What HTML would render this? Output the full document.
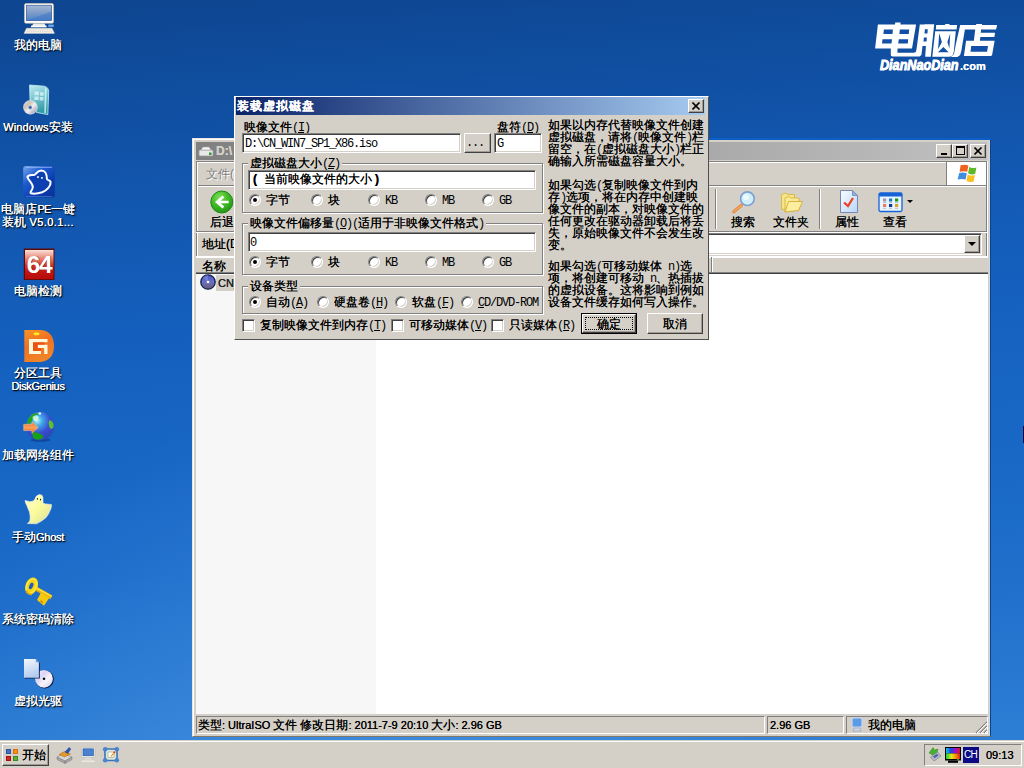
<!DOCTYPE html>
<html><head><meta charset="utf-8">
<style>
html,body{margin:0;padding:0}
body{width:1024px;height:768px;overflow:hidden;position:relative;font-family:"Liberation Sans",sans-serif;font-size:12px;line-height:14px;color:#000;
background:radial-gradient(circle 520px at 400px 900px,rgba(90,165,240,.45) 0%,rgba(90,165,240,.3) 50%,rgba(90,165,240,0) 100%),linear-gradient(176deg,#0e4590 0%,#0f4c9c 10%,#1256ae 24%,#1562c1 46%,#1b6bc8 70%,#2f80d6 100%);}
.a{position:absolute}
.t{position:absolute;white-space:nowrap;text-shadow:0 0 0}
/* desktop icons */
.dl{position:absolute;margin-top:1px;left:-12px;width:100px;text-align:center;color:#fff;font-size:12px;line-height:13px;text-shadow:0 0 0 #fff,1px 1px 1px #000,1px 1px 2px rgba(0,0,0,.8);white-space:nowrap}
.l{font-size:11px;letter-spacing:-.3px}
.l2{font-size:11px}
.di{position:absolute;left:22px;width:32px;height:32px}
/* 3d */
.win{position:absolute;background:#d4d0c8;border:1px solid;border-color:#d4d0c8 #404040 #404040 #d4d0c8;box-shadow:inset 1px 1px 0 #fff,inset -1px -1px 0 #808080;box-sizing:border-box}
.btn{position:absolute;background:#d4d0c8;border:1px solid;border-color:#fff #404040 #404040 #fff;box-shadow:inset -1px -1px 0 #a09c94;box-sizing:border-box}
.sunk{position:absolute;background:#fff;border:1px solid;border-color:#808080 #fff #fff #808080;box-shadow:inset 1px 1px 0 #404040,inset -1px -1px 0 #d4d0c8;box-sizing:border-box}
.grp{position:absolute;border:1px solid #808080;box-shadow:1px 1px 0 #fff,inset 1px 1px 0 #fff;box-sizing:border-box}
.gl{position:absolute;background:#d4d0c8;white-space:nowrap;padding:0 2px;line-height:12px;text-shadow:0 0 0 #000}
.rd{position:absolute;width:12px;height:12px;border-radius:50%;background:#fff;box-sizing:border-box;border:1px solid;border-color:#808080 #fff #fff #808080;box-shadow:inset 1px 1px 0 #404040,inset -1px -1px 0 #d4d0c8}
.rd.on:after{content:"";position:absolute;left:3px;top:3px;width:4px;height:4px;border-radius:50%;background:#000}
.cb{position:absolute;width:13px;height:13px;background:#fff;box-sizing:border-box;border:1px solid;border-color:#808080 #fff #fff #808080;box-shadow:inset 1px 1px 0 #404040,inset -1px -1px 0 #d4d0c8}
.mono{font-family:"Liberation Mono",monospace;display:inline-block;transform:scaleX(.833);transform-origin:0 50%}
.m{font-family:"Liberation Mono",monospace;letter-spacing:-1.2px;line-height:0;text-shadow:none}
.dt{position:absolute;white-space:nowrap;line-height:12px;font-size:12px;text-shadow:0 0 0 #000}
</style></head><body>

<!-- DESKTOP ICONS -->
<div id="desk">
<!--ICONS--><svg class="a" style="left:14px;top:0px" width="48" height="36" viewBox="14 0 48 36"><defs><linearGradient id="scr" x1="0" y1="0" x2="0" y2="1"><stop offset="0" stop-color="#a4b8d6"/><stop offset=".5" stop-color="#7d9cc8"/><stop offset="1" stop-color="#4c84cc"/></linearGradient></defs><rect x="24.500" y="3.500" width="29" height="19.800" rx="1.500" fill="#fbfbf8" stroke="#d8c8a8" stroke-width=".5"/><rect x="26.300" y="5.200" width="25.400" height="15.400" fill="url(#scr)" stroke="#2a4a8a" stroke-width=".6"/><path d="M26.500 20.400L51.500 11.500V20.400z" fill="#3f77c4" opacity=".55"/><path d="M33.500 23.400h11l1.700 3.700H31.200z" fill="#e8e8e8"/><rect x="31" y="25.600" width="15.500" height="1.700" fill="#fdfdfd"/><path d="M26.500 28.200h25.500l2.500 5.200h-30.500z" fill="#f4f2ea" stroke="#e0d8c8" stroke-width=".4"/><path d="M27 30h24.500M26.500 31.600h25.500" stroke="#d0ccc0" stroke-width=".7" stroke-dasharray="1.400 .8"/><rect x="48.300" y="24.600" width="5.500" height="2.300" fill="#6aa8e8"/></svg>
<svg class="a" style="left:14px;top:82px" width="48" height="36" viewBox="14 82 48 36"><defs><linearGradient id="box" x1="0" y1="0" x2=".3" y2="1"><stop offset="0" stop-color="#c4ecf2"/><stop offset=".45" stop-color="#7cc8d2"/><stop offset="1" stop-color="#2f9aa6"/></linearGradient><linearGradient id="cd" x1="0" y1="0" x2="1" y2="1"><stop offset="0" stop-color="#f4f4f4"/><stop offset=".3" stop-color="#c8c0b0"/><stop offset=".55" stop-color="#f0f0f4"/><stop offset=".8" stop-color="#b8b0c0"/><stop offset="1" stop-color="#f8f0e8"/></linearGradient></defs><path d="M29.600 85L44 86.200Q48.600 87 48.700 91.500L47.800 114.600L36.500 112.400L30 100z" fill="url(#box)" stroke="#c8f0f4" stroke-width=".8"/><path d="M44.800 87.500L46.800 89L45.900 113.500L44.300 113z" fill="#d4f6fa" opacity=".8"/><path d="M34.500 91.500h4.500v3.800h-4.500zM40 92.200h3.700v3.600H40zM34.300 96.500h4.500v3.600h-4.500zM39.800 97h3.700v3.400h-3.700z" fill="#e8fafc" opacity=".7"/><circle cx="30.400" cy="107.300" r="6.900" fill="url(#cd)" stroke="#e8e8f0" stroke-width=".6"/><circle cx="30.200" cy="107.400" r="2" fill="#8aa0c8"/><circle cx="30.200" cy="107.400" r="1.100" fill="#2858a8"/></svg>
<svg class="a" style="left:14px;top:162px" width="48" height="36" viewBox="14 162 48 36"><defs><linearGradient id="gsq" x1="0" y1="0" x2=".9" y2="1"><stop offset="0" stop-color="#7aa8ee"/><stop offset=".35" stop-color="#1d5cd0"/><stop offset=".7" stop-color="#0a3cae"/><stop offset="1" stop-color="#0a349c"/></linearGradient></defs><rect x="23.200" y="166" width="31.600" height="31.400" rx="2.500" fill="url(#gsq)"/><path d="M26 167.300h26" stroke="#a8c8f4" stroke-width=".9" opacity=".8"/><path d="M26 196.500h26" stroke="#5a88e0" stroke-width=".8" opacity=".7"/><path d="M27.400 177C28.500 174.500 32 175.500 34.600 174.700C36.500 174 36.500 171 41.200 170.500C46 170.600 46.800 174 46.900 179C47.500 180.500 50.500 180.500 50.600 182C51 186 47 190.500 42.200 192.300C38 193.600 33 193.800 30.800 193.200C29.500 192.600 32.500 190 32.800 187.500C33.200 183 28.500 181 27.400 177z" fill="#0c3fb0" stroke="#fff" stroke-width="2" stroke-linejoin="round"/><rect x="37.100" y="176.200" width="1.700" height="1.700" fill="#fff"/><rect x="41.100" y="177.100" width="1.700" height="1.700" fill="#fff"/></svg>
<svg class="a" style="left:14px;top:244px" width="48" height="36" viewBox="14 244 48 36"><defs><linearGradient id="r64" x1="0" y1="0" x2="0" y2="1"><stop offset="0" stop-color="#fbe0d8"/><stop offset=".3" stop-color="#e88070"/><stop offset=".52" stop-color="#d23824"/><stop offset=".75" stop-color="#c41410"/><stop offset="1" stop-color="#b40c0c"/></linearGradient></defs><rect x="23.800" y="248.500" width="30.700" height="31.500" fill="#5c0a0a"/><rect x="25" y="250" width="28.500" height="29.200" fill="url(#r64)"/><text x="39.500" y="273.200" text-anchor="middle" font-family="Liberation Sans,sans-serif" font-weight="bold" font-size="24.500" fill="#5a0808" letter-spacing="-1.300">64</text><text x="39" y="272.700" text-anchor="middle" font-family="Liberation Sans,sans-serif" font-weight="bold" font-size="24.500" fill="#fff" letter-spacing="-1.300">64</text></svg>
<svg class="a" style="left:14px;top:326px" width="48" height="36" viewBox="14 326 48 36"><defs><linearGradient id="dg" x1="0" y1="0" x2=".4" y2="1"><stop offset="0" stop-color="#f89428"/><stop offset=".5" stop-color="#f07020"/><stop offset="1" stop-color="#f08428"/></linearGradient></defs><path d="M24.300 330.100H41Q54 331.500 54 346Q54 360 41 362H24.300z" fill="url(#dg)"/><ellipse cx="36.500" cy="333.700" rx="3" ry="1.500" fill="#ffe820"/><path d="M29 339H47.500V342.200H33V350.900H41V354.100H29z" fill="#fdf8dc"/><path d="M37.700 344.800H47.500V354.100H44.200V347.900H37.700z" fill="#fdf8dc"/><path d="M33 342.200H44.500v2.600H37.700v3.100H41v3H33z" fill="#e8400c" opacity=".6"/></svg>
<svg class="a" style="left:14px;top:408px" width="48" height="36" viewBox="14 408 48 36"><defs><radialGradient id="gl" cx=".4" cy=".3" r=".75"><stop offset="0" stop-color="#b0f4f8"/><stop offset=".25" stop-color="#40a8e8"/><stop offset=".6" stop-color="#3a4cd0"/><stop offset="1" stop-color="#2848b0"/></radialGradient><linearGradient id="ar" x1="0" y1="0" x2="0" y2="1"><stop offset="0" stop-color="#f87018"/><stop offset=".5" stop-color="#f8a060"/><stop offset="1" stop-color="#f06810"/></linearGradient></defs><ellipse cx="40.500" cy="440" rx="10" ry="1.800" fill="#0a2a7a" opacity=".5"/><circle cx="40" cy="426.200" r="14.100" fill="url(#gl)"/><path d="M27 424Q27.500 417 34 413.500Q38 412.500 38 414.500Q33 416 32 421Q31.500 424 27 424z" fill="#1fa41c"/><path d="M32.500 417Q36 414 38.500 416.500Q39 420 36 421.500Q33 421 32.500 417z" fill="#d8f8e0" opacity=".85"/><path d="M49.500 420Q53.500 421 53.700 426Q53 429.500 51 429Q48.500 427 48.700 423z" fill="#5cc030"/><path d="M32 433Q36 431.500 39 433.500Q43.500 435 43.500 437Q40 441 34.500 439Q32.500 437 32 433z" fill="#18a018"/><circle cx="39.800" cy="413.500" r="1.300" fill="#e8f8f8"/><path d="M23.700 424.300H32V421.800L38.200 427.400L32 433.300V430.600H23.700z" fill="url(#ar)" stroke="#f8c8a0" stroke-width=".5"/></svg>
<svg class="a" style="left:14px;top:490px" width="48" height="36" viewBox="14 490 48 36"><defs><linearGradient id="gh" x1="0" y1="0" x2="1" y2="1"><stop offset="0" stop-color="#ffffd0"/><stop offset=".5" stop-color="#fafa9c"/><stop offset="1" stop-color="#d8dca0"/></linearGradient></defs><path d="M25 500.500L30 501.700Q33.800 501.500 34.800 499.600Q35.500 495.500 39.300 494.500Q42.800 494.600 42.900 497.500L43 502.600Q43.500 503.800 45.500 503.900L51.500 504.500Q51.600 508 50.100 510.600Q48.500 515 45.900 517.700Q41.500 521.500 36.500 523.800L27.400 523.500Q30 521.500 30 520Q30.500 516 29.500 512Q28 508.500 27.100 506Q25.300 503 25 500.500z" fill="url(#gh)" stroke="#e8f0ff" stroke-width=".6"/><ellipse cx="37.400" cy="498.800" rx=".6" ry=".900" fill="#111"/><ellipse cx="40.500" cy="499.600" rx=".6" ry=".900" fill="#111"/></svg>
<svg class="a" style="left:14px;top:572px" width="48" height="36" viewBox="14 572 48 36"><path d="M35 588L51.500 597.300" stroke="#e8b000" stroke-width="4.200"/><path d="M35 587.300L51.500 596.400" stroke="#fce040" stroke-width="1.600"/><path d="M41 592.500L37 600L44 605.800L49.500 597.500z" fill="#f4c810"/><path d="M40.500 600.800l2.200 1.800" stroke="#b87800" stroke-width="1.200"/><ellipse cx="31.600" cy="586" rx="6.100" ry="8.800" transform="rotate(22 31.600 586)" fill="#f8d418"/><ellipse cx="31.300" cy="586" rx="4.700" ry="7.400" transform="rotate(22 31.300 586)" fill="none" stroke="#fcf050" stroke-width="1"/><ellipse cx="31.200" cy="585.900" rx="1.900" ry="3.500" transform="rotate(22 31.200 585.900)" fill="#1a5cc0"/><path d="M26.500 590.500Q28 594.500 32 594.500" stroke="#e0a000" stroke-width="1.400" fill="none"/></svg>
<svg class="a" style="left:14px;top:654px" width="48" height="36" viewBox="14 654 48 36"><defs><linearGradient id="pgv" x1="0" y1="0" x2=".3" y2="1"><stop offset="0" stop-color="#f4f8ff"/><stop offset="1" stop-color="#b4ccf0"/></linearGradient><linearGradient id="cdv" x1="0" y1="0" x2="1" y2="1"><stop offset="0" stop-color="#fcfcff"/><stop offset=".35" stop-color="#dcd4f4"/><stop offset=".6" stop-color="#f8f4fc"/><stop offset="1" stop-color="#d0d0f0"/></linearGradient></defs><circle cx="44.700" cy="679.300" r="9.100" fill="#08143c"/><circle cx="44" cy="678.800" r="8.900" fill="url(#cdv)"/><circle cx="44" cy="678.800" r="2.200" fill="#f4f0fc"/><circle cx="44" cy="678.800" r="1.300" fill="#080810"/><path d="M24.700 659.600H36.500L39.800 663V678.500H24.700z" fill="#0a1c50"/><path d="M24 659H35.800L38.900 662.200V677.700H24z" fill="url(#pgv)"/><path d="M35.800 659V662.200H38.900z" fill="#6a9ce0"/></svg>
<!--/ICONS-->
<div class="dl" style="top:38px">我的电脑</div>
<div class="dl" style="top:120px"><span class="l" style="letter-spacing:.1px">Windows</span>安装</div>
<div class="dl" style="top:202px">电脑店<span class="l" style="letter-spacing:-.8px">PE</span>一键<br>装机<span class="l" style="letter-spacing:.4px"> V5.0.1...</span></div>
<div class="dl" style="top:284px">电脑检测</div>
<div class="dl" style="top:366px">分区工具<br><span class="l">DiskGenius</span></div>
<div class="dl" style="top:448px">加载网络组件</div>
<div class="dl" style="top:530px">手动<span class="l">Ghost</span></div>
<div class="dl" style="top:612px">系统密码清除</div>
<div class="dl" style="top:694px">虚拟光驱</div>
</div>

<div class="a" style="left:1023px;top:426px;width:1px;height:17px;background:#08083a"></div>
<!-- LOGO -->
<div id="logo"><!--LOGO--><svg class="a" style="left:868px;top:16px" width="140" height="64" viewBox="868 16 140 64"><path d="M877.9,24.6L895.0,24.6L895.2,22.5L900.6,22.5L900.4,24.6L916.1,24.6L912.0,48.6L897.6,48.6L897.4,52.7L913.9,52.7L915.8,52.1L916.5,49.2L919.8,24.6L924.8,24.6L922.0,50.5L921.4,54.9L919.5,56.4L892.6,56.4L891.1,56.0L890.8,54.9L890.8,48.6L875.1,48.6ZM924.5,24.2L934.2,24.2L930.8,56.8L925.2,56.8L925.9,46.1L922.0,46.1ZM936.2,24.9L945.1,24.9L945.2,23.9L949.5,23.9L949.4,24.9L957.1,24.9L956.6,29.6L935.8,29.6ZM935.2,31.2L955.8,31.2L953.8,51.8L952.6,55.5L949.5,56.8L932.3,56.8ZM960.2,24.9L976.1,24.9L976.2,23.9L982.1,23.9L981.9,24.9L997.1,24.9L996.1,29.6L964.9,29.6L961.4,50.5L960.2,54.9L957.4,57.1L950.5,57.1L953.0,55.5L954.2,53.0L956.1,43.0ZM975.2,29.6L981.1,29.6L980.8,32.7L995.0,32.7L994.4,37.1L980.3,37.1L979.9,40.8L973.9,40.8ZM966.1,40.8L994.6,40.8L992.1,54.9L991.1,56.1L963.9,56.1Z" fill="#fff"/><path d="M883.9,29.6L892.9,29.6L892.5,33.9L883.4,33.9ZM899.8,29.6L909.2,29.6L908.8,33.9L899.4,33.9ZM882.5,39.2L892.0,39.2L891.5,43.6L882.0,43.6ZM898.8,39.2L908.2,39.2L907.8,43.6L898.2,43.6ZM924.9,29.2L927.8,29.2L927.4,33.6L924.5,33.6ZM923.9,37.4L926.9,37.4L926.5,41.4L923.5,41.4ZM939.2,33.3L941.9,42.1L938.1,49.2ZM950.2,33.6L947.4,42.1L949.4,48.6ZM943.4,47.1L937.9,52.2L948.6,52.2ZM971.2,46.1L988.0,46.1L987.1,51.8L970.5,51.8Z" fill="#1150a6"/></svg><!--/LOGO-->
<div class="t" style="left:880px;top:57px;color:#fff;font-weight:bold;font-style:italic;font-size:14.5px;line-height:16px;-webkit-text-stroke:.8px #fff;transform:scaleX(.87);transform-origin:0 0">DianNaoDian</div>
<div class="t" style="left:960px;top:59px;color:#fff;font-weight:bold;font-size:11px;line-height:14px">.com</div></div>

<!-- EXPLORER -->
<div id="exp" class="a" style="left:192px;top:138px;width:799px;height:599px;box-sizing:border-box;background:#d4d0c8;border:1px solid;border-color:#e8e6e0 #0c4488 #807868 #e8e6e0;box-shadow:inset 1px 1px 0 #fff,inset -1px 0 0 #d0d8e6"></div>
<div class="a" style="left:709px;top:138px;width:282px;height:2px;background:#0c5fc8"></div>
<!-- title bar -->
<div class="a" style="left:196px;top:142px;width:791px;height:18px;background:linear-gradient(90deg,#808080,#c0c0c0)"></div>
<svg class="a" style="left:198px;top:143px" width="16" height="16" viewBox="0 0 16 16"><rect x="1" y="7" width="14" height="6" rx="1" fill="#e8e8e8" stroke="#9a9a9a" stroke-width=".8"/><path d="M3 7l2-3h6l2 3z" fill="#f4f4f4" stroke="#aaa" stroke-width=".6"/><rect x="11" y="9.5" width="2.5" height="2.5" fill="#2e9a3a"/></svg>
<div class="t" style="left:216px;top:144px;font-weight:bold;color:#d4d0c8;font-size:12px;line-height:14px">D:\</div>
<!-- caption buttons -->
<div class="btn" style="left:936px;top:144px;width:16px;height:14px"><div class="a" style="left:4px;top:8px;width:6px;height:2px;background:#000"></div></div>
<div class="btn" style="left:952px;top:144px;width:16px;height:14px"><div class="a" style="left:3px;top:1px;width:9px;height:9px;box-sizing:border-box;border:1px solid #000;border-top-width:2px"></div></div>
<div class="btn" style="left:970px;top:144px;width:16px;height:14px"><svg class="a" style="left:3px;top:2px" width="9" height="8" viewBox="0 0 9 8"><path d="M0.5 0.5l7 7M7.5 0.5l-7 7" stroke="#000" stroke-width="1.6" fill="none"/></svg></div>
<!-- menu band -->
<div class="a" style="left:196px;top:161px;width:791px;height:1px;background:#808080"></div>
<div class="a" style="left:196px;top:162px;width:791px;height:1px;background:#fff"></div>
<div class="t" style="left:206px;top:167px;color:#808080;text-shadow:1px 1px 0 #fff;font-size:12px">文件(F)</div>
<div class="a" style="left:946px;top:162px;width:1px;height:24px;background:#808080"></div>
<div class="a" style="left:947px;top:162px;width:40px;height:23px;background:#fff"></div>
<svg class="a" style="left:944px;top:160px" width="48" height="28" viewBox="944 160 48 28"><path d="M960.600,165.300Q964.500,164 968.400,165.600L967.200,171.800Q963.500,170.600 959.600,171.800Z" fill="#f0601e"/><path d="M969.200,167Q972.500,168.800 976.400,167.400L975.200,173.800Q971.800,175.200 968.100,173.200Z" fill="#5cb82a"/><path d="M959.200,172.900Q963,171.800 966.800,173.200L965.600,179.600Q961.800,178.400 957.600,179.600Z" fill="#3f8ee0"/><path d="M967.700,174.400Q971,176.400 974.900,175L973.700,181.400Q970,182.800 966.400,180.800Z" fill="#f8c020"/></svg>
<div class="a" style="left:196px;top:185px;width:791px;height:1px;background:#808080"></div>
<div class="a" style="left:196px;top:186px;width:791px;height:1px;background:#fff"></div>
<div class="a" style="left:196px;top:161px;width:1px;height:95px;background:#808080"></div><div class="a" style="left:197px;top:162px;width:1px;height:94px;background:#fff"></div>
<div class="a" style="left:986px;top:161px;width:1px;height:95px;background:#808080"></div><div class="a" style="left:987px;top:161px;width:1px;height:95px;background:#fff"></div>
<!-- toolbar -->
<div id="tbicons">
<svg class="a" style="left:209px;top:189px" width="26" height="26" viewBox="0 0 26 26"><defs><radialGradient id="gb" cx=".4" cy=".3" r=".8"><stop offset="0" stop-color="#7fe05a"/><stop offset=".5" stop-color="#3fb822"/><stop offset="1" stop-color="#1f8a14"/></radialGradient></defs><circle cx="12.800" cy="13" r="11" fill="url(#gb)" stroke="#1c8a1a" stroke-width="1"/><path d="M6 13l7.500-6.500 1.800 2-3.700 3.200h8v2.600h-8l3.700 3.200-1.800 2z" fill="#fff"/></svg>
<svg class="a" style="left:730px;top:190px" width="28" height="26" viewBox="0 0 28 26"><path d="M11.500 15.200L3.800 21.800" stroke="#e08a3a" stroke-width="3.200" stroke-linecap="round"/><path d="M11.500 15.200L4 21.600" stroke="#f4b070" stroke-width="1.200" stroke-linecap="round"/><circle cx="17.400" cy="8.700" r="6.800" fill="#cfeefa" stroke="#7d9fd0" stroke-width="1.600"/><circle cx="16" cy="7.300" r="3" fill="#effbff" opacity=".8"/></svg>
<svg class="a" style="left:779px;top:191px" width="26" height="24" viewBox="0 0 26 24"><path d="M2.500 3.500l4-1.500 2 1.500h7v14l-13 1z" fill="#f7e48a" stroke="#d9b63a" stroke-width=".9"/><path d="M6 7l4-1.500 2 1.500h8v12l-14 2z" fill="#f9ea9a" stroke="#d9b63a" stroke-width=".9"/><path d="M6 21l3.500-10.500h14l-4 9z" fill="#fbee9e" stroke="#d4ae30" stroke-width=".9"/></svg>
<svg class="a" style="left:839px;top:189px" width="20" height="25" viewBox="0 0 20 25"><defs><linearGradient id="pg" x1="0" y1="0" x2="1" y2="1"><stop offset="0" stop-color="#fafdff"/><stop offset="1" stop-color="#b6d6f6"/></linearGradient></defs><path d="M1.500 1.500h12l5 5v17h-17z" fill="url(#pg)" stroke="#7a86b8" stroke-width="1"/><path d="M13.500 1.500v5h5z" fill="#8ab4e6" stroke="#7a86b8" stroke-width=".8"/><path d="M5 13.500l4 3.500 5-8" fill="none" stroke="#f0402a" stroke-width="2.300"/></svg>
<svg class="a" style="left:878px;top:192px" width="25" height="21" viewBox="0 0 25 21"><rect x="1" y="1" width="23" height="18.500" rx="1.500" fill="#eaf4fe" stroke="#1762d6" stroke-width="1.300"/><rect x="1" y="1" width="23" height="3.500" rx="1" fill="#1762d6"/><rect x="5" y="6.500" width="3.200" height="3" fill="#9a94b8"/><rect x="11" y="6.500" width="3.200" height="3" fill="#1f78c8"/><rect x="17" y="6.500" width="3.200" height="3" fill="#12961e"/><rect x="5" y="12" width="3.200" height="3" fill="#f07868"/><rect x="11" y="12" width="3.200" height="3" fill="#0a3a9a"/><rect x="17" y="12" width="3.200" height="3" fill="#e0a020"/><path d="M5 10.600h3.200M11 10.600h3.200M17 10.600h3.200M5 16.300h3.200M11 16.300h3.200M17 16.300h3.200" stroke="#9aa" stroke-width=".7"/></svg>
</div>
<div class="t" style="left:210px;top:215px">后退</div>
<div class="a" style="left:715px;top:189px;width:1px;height:40px;background:#808080;box-shadow:1px 0 0 #fff"></div>
<div class="t" style="left:731px;top:215px">搜索</div>
<div class="t" style="left:773px;top:215px">文件夹</div>
<div class="a" style="left:819px;top:189px;width:1px;height:40px;background:#808080;box-shadow:1px 0 0 #fff"></div>
<div class="t" style="left:835px;top:215px">属性</div>
<div class="t" style="left:883px;top:215px">查看</div>
<div class="a" style="left:907px;top:200px;width:0;height:0;border:3px solid transparent;border-top:3px solid #000"></div>
<div class="a" style="left:196px;top:231px;width:791px;height:1px;background:#808080"></div>
<div class="a" style="left:196px;top:232px;width:791px;height:1px;background:#fff"></div>
<!-- address -->
<div class="t" style="left:202px;top:237px">地址(D)</div>
<div class="sunk" style="left:240px;top:233px;width:742px;height:22px"></div>
<div class="btn" style="left:964px;top:235px;width:16px;height:18px"><div class="a" style="left:3px;top:6px;width:0;height:0;border:4px solid transparent;border-top:4px solid #000"></div></div>
<!-- header -->
<div class="a" style="left:196px;top:256px;width:792px;height:17px;background:#d4d0c8;border-bottom:1px solid #404040;box-shadow:inset 0 -1px 0 #808080,inset 0 2px 0 #fff"></div>
<div class="t" style="left:202px;top:259px">名称</div>
<div class="a" style="left:711px;top:257px;width:1px;height:15px;background:#808080;box-shadow:1px 0 0 #fff"></div>
<!-- list -->
<div class="a" style="left:196px;top:274px;width:792px;height:440px;background:#fff"></div>
<div class="a" style="left:196px;top:274px;width:180px;height:440px;background:#f7f7f7"></div>
<div class="a" style="left:216px;top:275px;width:120px;height:16px;background:#d4d0c8"></div>
<svg class="a" style="left:200px;top:274px" width="16" height="16" viewBox="0 0 16 16"><defs><linearGradient id="cdi" x1="0" y1="0" x2="0" y2="1"><stop offset="0" stop-color="#4a58d0"/><stop offset=".5" stop-color="#6a70c0"/><stop offset="1" stop-color="#6a5878"/></linearGradient></defs><circle cx="8" cy="8" r="7.200" fill="url(#cdi)" stroke="#10204a" stroke-width="1.300"/><path d="M8 8L3 3.500A7 7 0 0 1 8 1z" fill="#8d92e8" opacity=".5"/><circle cx="8" cy="8" r="1.300" fill="#fff"/></svg>
<div class="t" style="left:218px;top:276px;font-size:11px;color:#222">CN_WIN7_SP1_X86.iso</div>
<!-- status bar -->
<div class="a" style="left:196px;top:714px;width:791px;height:21px;background:#d4d0c8"></div>
<div class="a" style="left:196px;top:716px;width:569px;height:18px;box-sizing:border-box;border:1px solid;border-color:#808080 #fff #fff #808080"></div>
<div class="a" style="left:767px;top:716px;width:77px;height:18px;box-sizing:border-box;border:1px solid;border-color:#808080 #fff #fff #808080"></div>
<div class="a" style="left:846px;top:716px;width:142px;height:18px;box-sizing:border-box;border:1px solid;border-color:#808080 #fff #fff #808080"></div>
<div class="t" style="left:198px;top:718px">类型<span class="l2">: UltraISO </span>文件<span class="l2"> </span>修改日期<span class="l2">: 2011-7-9 20:10 </span>大小<span class="l2">: 2.96 GB</span></div>
<div class="t" style="left:770px;top:718px"><span class="l2">2.96 GB</span></div>
<div class="t" style="left:868px;top:718px">我的电脑</div>
<svg class="a" style="left:850px;top:717px" width="14" height="16" viewBox="0 0 14 16"><rect x="2" y="1" width="10" height="9" rx="1.500" fill="#5b9be8" stroke="#c8d8f0" stroke-width="1.200"/><path d="M4 11h6l1 3H3z" fill="#d0d8e8" stroke="#8898b8" stroke-width=".6"/></svg>
<svg class="a" style="left:975px;top:721px" width="13" height="13" viewBox="0 0 13 13"><path d="M12 1L1 12M12 5L5 12M12 9L9 12" stroke="#808080" stroke-width="1.200"/><path d="M12 2L2 12M12 6L6 12M12 10L10 12" stroke="#fff" stroke-width="1"/></svg>

<!-- DIALOG -->
<div id="dlg" class="a" style="left:234px;top:96px;width:475px;height:244px;box-sizing:border-box;background:#d4d0c8;border:1px solid;border-color:#fff #505050 #505050 #fff"></div>
<div class="a" style="left:236px;top:97px;width:469px;height:18px;background:linear-gradient(90deg,#0a246a,#a6caf0)"></div>
<div class="t" style="left:237px;top:99px;color:#fff;font-weight:bold;font-size:12px;line-height:14px;letter-spacing:1px">装载虚拟磁盘</div>
<div class="btn" style="left:688px;top:99px;width:16px;height:14px"><svg class="a" style="left:3px;top:2px" width="9" height="8" viewBox="0 0 9 8"><path d="M0.5 0.5l7 7M7.5 0.5l-7 7" stroke="#000" stroke-width="1.6" fill="none"/></svg></div>
<div class="dt" style="left:244px;top:121px">映像文件<span class="m">(<u>I</u>)</span></div>
<div class="sunk" style="left:242px;top:133px;width:219px;height:20px"></div>
<div class="dt" style="left:245px;top:137px"><span class="m">D:\CN_WIN7_SP1_X86.iso</span></div>
<div class="btn" style="left:464px;top:133px;width:27px;height:20px"></div>
<div class="dt" style="left:466px;top:136px"><span class="m">...</span></div>
<div class="dt" style="left:497px;top:121px">盘符<span class="m">(<u>D</u>)</span></div>
<div class="sunk" style="left:494px;top:133px;width:48px;height:20px"></div>
<div class="dt" style="left:497px;top:137px"><span class="m">G</span></div>
<!-- group 1 -->
<div class="grp" style="left:242px;top:163px;width:301px;height:50px"></div>
<div class="gl" style="left:248px;top:157px">虚拟磁盘大小<span class="m">(<u>Z</u>)</span></div>
<div class="sunk" style="left:248px;top:170px;width:288px;height:20px"></div>
<div class="dt" style="left:253px;top:173px;font-weight:bold">(</div><div class="dt" style="left:264px;top:173px">当前映像文件的大小</div><div class="dt" style="left:375px;top:173px;font-weight:bold">)</div>
<div class="rd on" style="left:249px;top:194px"></div><div class="dt" style="left:266px;top:194px">字节</div>
<div class="rd" style="left:311px;top:194px"></div><div class="dt" style="left:328px;top:194px">块</div>
<div class="rd" style="left:368px;top:194px"></div><div class="dt" style="left:385px;top:194px"><span class="m">KB</span></div>
<div class="rd" style="left:425px;top:194px"></div><div class="dt" style="left:442px;top:194px"><span class="m">MB</span></div>
<div class="rd" style="left:482px;top:194px"></div><div class="dt" style="left:499px;top:194px"><span class="m">GB</span></div>

<!-- group 2 -->
<div class="grp" style="left:242px;top:223px;width:301px;height:52px"></div>
<div class="gl" style="left:248px;top:217px">映像文件偏移量<span class="m">(<u>O</u>)</span><span class="m">(</span>适用于非映像文件格式<span class="m">)</span></div>
<div class="sunk" style="left:248px;top:232px;width:288px;height:20px"></div>
<div class="dt" style="left:250px;top:236px"><span class="m">0</span></div>
<div class="rd on" style="left:249px;top:256px"></div><div class="dt" style="left:266px;top:256px">字节</div>
<div class="rd" style="left:311px;top:256px"></div><div class="dt" style="left:328px;top:256px">块</div>
<div class="rd" style="left:368px;top:256px"></div><div class="dt" style="left:385px;top:256px"><span class="m">KB</span></div>
<div class="rd" style="left:425px;top:256px"></div><div class="dt" style="left:442px;top:256px"><span class="m">MB</span></div>
<div class="rd" style="left:482px;top:256px"></div><div class="dt" style="left:499px;top:256px"><span class="m">GB</span></div>

<!-- group 3 -->
<div class="grp" style="left:242px;top:286px;width:301px;height:28px"></div>
<div class="gl" style="left:248px;top:280px">设备类型</div>
<div class="rd on" style="left:249px;top:296px"></div><div class="dt" style="left:266px;top:296px">自动<span class="m">(<u>A</u>)</span></div>
<div class="rd" style="left:317px;top:296px"></div><div class="dt" style="left:334px;top:296px">硬盘卷<span class="m">(<u>H</u>)</span></div>
<div class="rd" style="left:395px;top:296px"></div><div class="dt" style="left:412px;top:296px">软盘<span class="m">(<u>F</u>)</span></div>
<div class="rd" style="left:461px;top:296px"></div><div class="dt" style="left:478px;top:296px"><span class="m"><u>C</u>D/DVD-ROM</span></div>

<div class="cb" style="left:242px;top:319px"></div><div class="dt" style="left:260px;top:319px">复制映像文件到内存<span class="m">(<u>T</u>)</span></div>
<div class="cb" style="left:391px;top:319px"></div><div class="dt" style="left:409px;top:319px">可移动媒体<span class="m">(<u>V</u>)</span></div>
<div class="cb" style="left:491px;top:319px"></div><div class="dt" style="left:509px;top:319px">只读媒体<span class="m">(<u>R</u>)</span></div>
<!-- help -->
<div class="dt" style="left:548px;top:119px">如果以内存代替映像文件创建<br>虚拟磁盘，请将<span class="m">(</span>映像文件<span class="m">)</span>栏<br>留空，在<span class="m">(</span>虚拟磁盘大小<span class="m">)</span>栏正<br>确输入所需磁盘容量大小。</div>
<div class="dt" style="left:548px;top:179px">如果勾选<span class="m">(</span>复制映像文件到内<br>存<span class="m">)</span>选项，将在内存中创建映<br>像文件的副本，对映像文件的<br>任何更改在驱动器卸载后将丢<br>失，原始映像文件不会发生改<br>变。</div>
<div class="dt" style="left:548px;top:260px">如果勾选<span class="m">(</span>可移动媒体<span class="m"> n)</span>选<br>项，将创建可移动<span class="m"> n</span>、热插拔<br>的虚拟设备。这将影响到例如<br>设备文件缓存如何写入操作。</div>
<!-- buttons -->
<div class="a" style="left:581px;top:313px;width:56px;height:21px;background:#000"></div>
<div class="btn" style="left:582px;top:314px;width:54px;height:19px"></div>
<div class="a" style="left:585px;top:317px;width:48px;height:13px;box-sizing:border-box;border:1px dotted #000"></div>
<div class="dt" style="left:597px;top:318px">确定</div>
<div class="btn" style="left:647px;top:313px;width:56px;height:21px"></div>
<div class="dt" style="left:663px;top:318px">取消</div>

<!-- TASKBAR -->
<div id="tb" class="a" style="left:0;top:740px;width:1024px;height:28px;background:#d4d0c8;box-shadow:inset 0 1px 0 #d4d0c8,inset 0 2px 0 #fff"></div>
<div class="btn" style="left:2px;top:744px;width:47px;height:22px"></div>
<div class="a" style="left:6px;top:749px;width:5px;height:5px;background:#3f74c4;box-shadow:inset 0 0 0 1px #2c56a0"></div>
<div class="a" style="left:13px;top:749px;width:5px;height:5px;background:#f89020;box-shadow:inset 0 0 0 1px #d87008"></div>
<div class="a" style="left:6px;top:756px;width:5px;height:5px;background:#d02828;box-shadow:inset 0 0 0 1px #a81010"></div>
<div class="a" style="left:13px;top:756px;width:5px;height:5px;background:#60b038;box-shadow:inset 0 0 0 1px #3c8820"></div>
<div class="t" style="left:22px;top:748px;font-size:12px;line-height:14px">开始</div>
<svg class="a" style="left:56px;top:746px" width="18" height="18" viewBox="0 0 18 18"><path d="M1 11l6-3 9 3-7 4z" fill="#d8d8d8" stroke="#8a8a8a" stroke-width=".6"/><path d="M1 11v2.500l8 4V15zM9 15v2.500l7-4V11z" fill="#a8a8a8" stroke="#777" stroke-width=".5"/><path d="M3 8.500l5.500-3 6 2.500-6 3z" fill="#e89828" stroke="#a86810" stroke-width=".5"/><path d="M9 6l4-4.500 1.800 1.500-3 4.500z" fill="#2858b8" stroke="#143c8c" stroke-width=".5"/></svg>
<svg class="a" style="left:80px;top:746px" width="17" height="17" viewBox="0 0 17 17"><rect x="1.500" y="1.200" width="13.500" height="10.300" rx="1" fill="#f4f4f0" stroke="#b8b8b0" stroke-width=".7"/><rect x="3" y="2.800" width="10.500" height="7" fill="#4a80d0" stroke="#28509c" stroke-width=".6"/><path d="M5.500 11.800h5.500l.8 1.800H4.700z" fill="#e0e0e0"/><path d="M2 14.200h12.500l1 2H1z" fill="#f0efe8" stroke="#c8c4b8" stroke-width=".4"/></svg>
<svg class="a" style="left:102px;top:746px" width="18" height="18" viewBox="0 0 18 18"><rect x="3" y="3" width="12" height="11.500" rx="2.500" fill="#dfe8d8" stroke="#3a72b8" stroke-width="1.600"/><circle cx="3.200" cy="3.200" r="2.300" fill="#4a84cc"/><circle cx="14.800" cy="3.200" r="2.300" fill="#4a84cc"/><circle cx="3.200" cy="14.300" r="2.300" fill="#4a84cc"/><circle cx="14.800" cy="14.300" r="2.300" fill="#4a84cc"/><rect x="6" y="6" width="6" height="5.500" fill="#fbfbf4" stroke="#888" stroke-width=".5"/><path d="M8.500 10l3.500-4 1 .8-3.500 4z" fill="#e8a020"/><circle cx="12.500" cy="6.200" r=".900" fill="#d83020"/></svg>
<div class="a" style="left:924px;top:744px;width:98px;height:22px;box-sizing:border-box;border:1px solid;border-color:#808080 #fff #fff #808080"></div>
<svg class="a" style="left:927px;top:746px" width="15" height="16" viewBox="0 0 15 16"><path d="M2 7l4-5.500 1.500 2.500 3.500-1-1.500 5-3.500 1z" fill="#48b030" stroke="#2c8818" stroke-width=".5"/><path d="M3.500 11l7-5 3.500 4-7 5z" fill="#b8bcc4" stroke="#70747c" stroke-width=".6"/><path d="M6 10.500l4-2.800 1.500 1.700-4 2.800z" fill="#4a64a8"/></svg>
<svg class="a" style="left:945px;top:747px" width="16" height="16" viewBox="0 0 16 16"><defs><linearGradient id="rb1" x1="0" y1="0" x2="1" y2="0"><stop offset="0" stop-color="#10c8e8"/><stop offset=".35" stop-color="#2040e0"/><stop offset=".7" stop-color="#a010c0"/><stop offset="1" stop-color="#e01030"/></linearGradient><linearGradient id="rb2" x1="0" y1="0" x2="1" y2="0"><stop offset="0" stop-color="#10d040"/><stop offset=".4" stop-color="#e8e810"/><stop offset=".75" stop-color="#f08010"/><stop offset="1" stop-color="#e82010"/></linearGradient></defs><rect x="0" y="0" width="16" height="13.500" fill="#000"/><rect x="1" y="1" width="14" height="5.500" fill="url(#rb1)"/><rect x="1" y="6.500" width="14" height="5.500" fill="url(#rb2)"/><rect x="3" y="13.500" width="10" height="2.300" fill="#000"/><rect x="12" y="12.300" width="2" height=".900" fill="#30e030"/></svg>
<div class="a" style="left:963px;top:747px;width:16px;height:16px;background:#0a0a84"></div>
<div class="t" style="left:964px;top:748px;color:#fff;font-size:10px;line-height:14px;letter-spacing:-.7px;text-shadow:none">CH</div>
<div class="t" style="left:986px;top:748px;font-size:11px;line-height:14px">09:13</div>

</body></html>
